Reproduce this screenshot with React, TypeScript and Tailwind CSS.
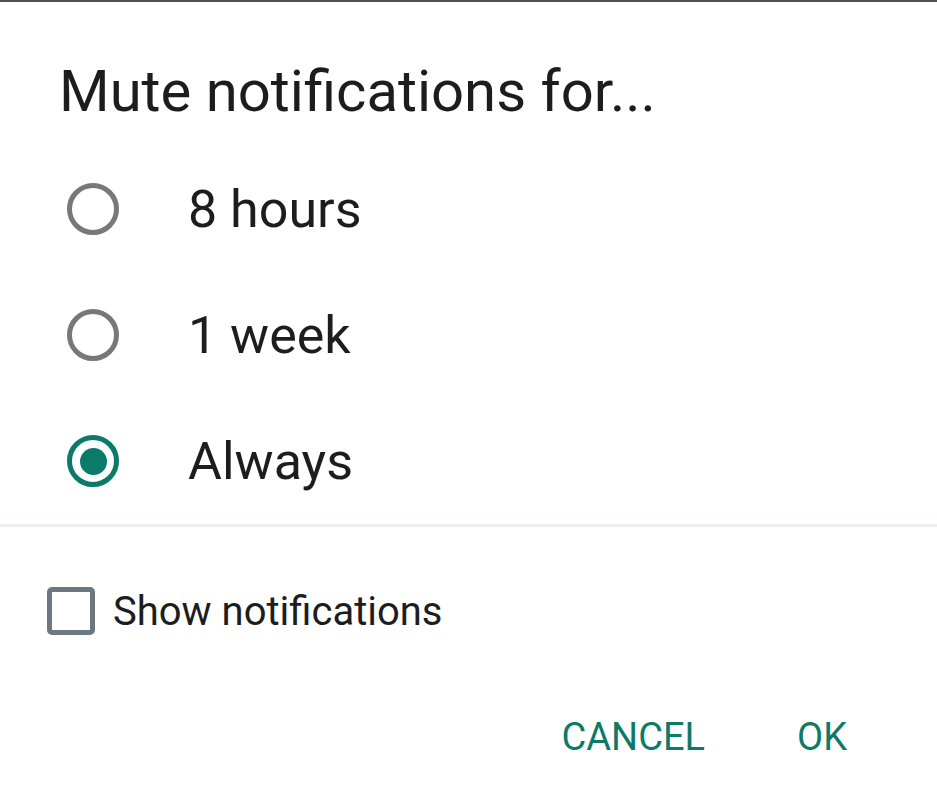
import React from "react";

const font = { fontFamily: "Roboto, 'Noto Sans', sans-serif" };

function Radio({ checked }: { checked?: boolean }) {
  return checked ? (
    <div className="w-[52px] h-[52px] rounded-full border-[5px] border-[#0b7b69] flex items-center justify-center shrink-0">
      <div className="w-[27px] h-[27px] rounded-full bg-[#0b7b69]" />
    </div>
  ) : (
    <div className="w-[52px] h-[52px] rounded-full border-[5px] border-[#787878] shrink-0" />
  );
}

const options = [
  { label: "8 hours", checked: false },
  { label: "1 week", checked: false },
  { label: "Always", checked: true },
];

export default function App() {
  return (
    <div
      className="w-full h-[812px] bg-white border-t-2 border-[#55524a] flex flex-col text-[#1d1d1d]"
      style={font}
    >
      <div className="pt-[55px] pl-[59px] h-[144px]">
        <h1 className="text-[58px] leading-[68px] font-normal">Mute notifications for...</h1>
      </div>
      <div className="flex flex-col">
        {options.map((o) => (
          <div key={o.label} className="h-[126px] flex items-center pl-[67px]">
            <Radio checked={o.checked} />
            <span className="ml-[69px] text-[52px] leading-[62px] pt-[2px]">{o.label}</span>
          </div>
        ))}
      </div>
      <div className="h-[3px] bg-[#eceef1]" />
      <div className="h-[168px] flex items-center pl-[47px]">
        <div className="w-[48px] h-[48px] rounded-[5px] border-[5px] border-[#6c7780] shrink-0" />
        <span className="ml-[18px] text-[40px] leading-[48px] pt-[2px]">Show notifications</span>
      </div>
      <div className="h-[83px] flex items-center justify-end pr-[90px] gap-[92px] text-[#0d7a68]">
        <span className="text-[38px] leading-[46px]">CANCEL</span>
        <span className="text-[38px] leading-[46px]">OK</span>
      </div>
    </div>
  );
}
